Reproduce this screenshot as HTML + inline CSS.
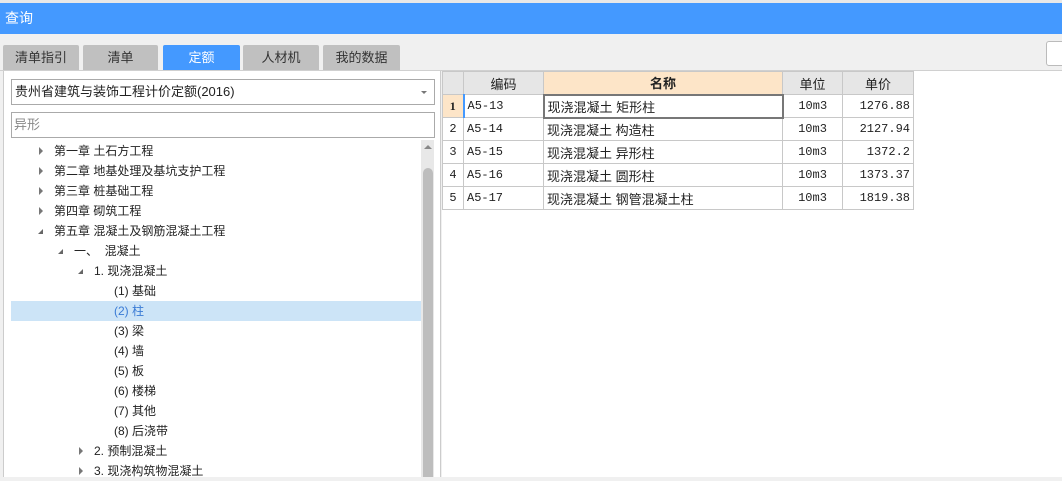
<!DOCTYPE html>
<html><head><meta charset="utf-8"><style>
*{margin:0;padding:0;box-sizing:border-box}
body{width:1062px;height:477px;overflow:hidden;background:#f0f0f0;font-family:"Liberation Sans","Noto Sans CJK SC",sans-serif;font-size:12px;color:#222;position:relative}
.a{position:absolute}
.tab{position:absolute;top:45px;height:25px;background:#c0c0c0;border-radius:2px 2px 0 0;text-align:center;line-height:26px;font-size:13px;color:#333}
.tr{position:absolute;height:20px;line-height:20px;font-size:12px;white-space:nowrap}
.arr{position:absolute;width:0;height:0}
td{border:1px solid #c8c8c8;height:23px;padding:0 3px;font-size:12px;white-space:nowrap}
.m{font-family:"Liberation Mono","Noto Sans CJK SC",monospace;font-size:12px}
.n{font-size:13px}
</style></head><body>
<div class="a" style="left:0;top:0;width:1062px;height:3px;background:#e8e8e8"></div>
<div class="a" style="left:0;top:3px;width:1062px;height:31px;background:#4499ff;color:#fff;font-size:14px;line-height:31px;padding-left:5px">查询</div>
<div class="tab" style="left:3px;width:76px">清单指引</div>
<div class="tab" style="left:83px;width:75px">清单</div>
<div class="tab" style="left:163px;width:77px;background:#4499ff;color:#fff">定额</div>
<div class="tab" style="left:243px;width:76px">人材机</div>
<div class="tab" style="left:323px;width:77px">我的数据</div>
<div class="a" style="left:1046px;top:41px;width:20px;height:25px;background:#fff;border:1px solid #bbb;border-radius:3px"></div>
<div class="a" style="left:0;top:70px;width:1062px;height:1px;background:#d0d0d0"></div>
<div class="a" style="left:3px;top:71px;width:438px;height:406px;background:#fff;border-left:1px solid #ccc;border-right:1px solid #ccc"></div>
<div class="a" style="left:11px;top:79px;width:424px;height:26px;border:1px solid #aaa;background:#fff;font-size:13px;line-height:24px;padding-left:3px">贵州省建筑与装饰工程计价定额(2016)<span style="position:absolute;right:7px;top:11px;border-left:3px solid transparent;border-right:3px solid transparent;border-top:3px solid #777"></span></div>
<div class="a" style="left:11px;top:112px;width:424px;height:26px;border:1px solid #aaa;background:#fff;font-size:13px;line-height:24px;padding-left:2px;color:#888">异形</div>
<div class="a" style="left:421px;top:140px;width:13px;height:337px;background:#e8e8e8"></div>
<div class="a" style="left:423px;top:168px;width:10px;height:309px;background:#bdbdbd;border-radius:5px 5px 0 0"></div>
<div class="a" style="left:424px;top:145px;border-left:4px solid transparent;border-right:4px solid transparent;border-bottom:4px solid #888"></div>
<div class="a" style="left:11px;top:301px;width:410px;height:20px;background:#cce4f7"></div>
<div class="tr" style="left:54px;top:141px">第一章 土石方工程</div>
<div class="tr" style="left:54px;top:161px">第二章 地基处理及基坑支护工程</div>
<div class="tr" style="left:54px;top:181px">第三章 桩基础工程</div>
<div class="tr" style="left:54px;top:201px">第四章 砌筑工程</div>
<div class="tr" style="left:54px;top:221px">第五章 混凝土及钢筋混凝土工程</div>
<div class="tr" style="left:74px;top:241px">一、&nbsp; 混凝土</div>
<div class="tr" style="left:94px;top:261px">1. 现浇混凝土</div>
<div class="tr" style="left:114px;top:281px">(1) 基础</div>
<div class="tr" style="left:114px;top:301px;color:#3a7bd5">(2) 柱</div>
<div class="tr" style="left:114px;top:321px">(3) 梁</div>
<div class="tr" style="left:114px;top:341px">(4) 墙</div>
<div class="tr" style="left:114px;top:361px">(5) 板</div>
<div class="tr" style="left:114px;top:381px">(6) 楼梯</div>
<div class="tr" style="left:114px;top:401px">(7) 其他</div>
<div class="tr" style="left:114px;top:421px">(8) 后浇带</div>
<div class="tr" style="left:94px;top:441px">2. 预制混凝土</div>
<div class="tr" style="left:94px;top:461px">3. 现浇构筑物混凝土</div>
<div class="arr" style="left:39px;top:147px;border-top:4px solid transparent;border-bottom:4px solid transparent;border-left:4px solid #777"></div>
<div class="arr" style="left:39px;top:167px;border-top:4px solid transparent;border-bottom:4px solid transparent;border-left:4px solid #777"></div>
<div class="arr" style="left:39px;top:187px;border-top:4px solid transparent;border-bottom:4px solid transparent;border-left:4px solid #777"></div>
<div class="arr" style="left:39px;top:207px;border-top:4px solid transparent;border-bottom:4px solid transparent;border-left:4px solid #777"></div>
<div class="arr" style="left:79px;top:447px;border-top:4px solid transparent;border-bottom:4px solid transparent;border-left:4px solid #777"></div>
<div class="arr" style="left:79px;top:467px;border-top:4px solid transparent;border-bottom:4px solid transparent;border-left:4px solid #777"></div>
<div class="arr" style="left:38px;top:229px;border-left:5px solid transparent;border-bottom:5px solid #666"></div>
<div class="arr" style="left:58px;top:249px;border-left:5px solid transparent;border-bottom:5px solid #666"></div>
<div class="arr" style="left:78px;top:269px;border-left:5px solid transparent;border-bottom:5px solid #666"></div>
<div class="a" style="left:442px;top:71px;width:620px;height:406px;background:#fff"></div>
<table class="a" style="left:442px;top:71px;border-collapse:collapse;background:#fff">
<tr style="background:#e6e6e6;text-align:center;font-size:13px"><td style="width:21px"></td><td class="n" style="width:80px">编码</td><td class="n" style="width:239px;background:#fde5c8;font-weight:bold">名称</td><td class="n" style="width:60px">单位</td><td class="n" style="width:71px">单价</td></tr>
<tr><td style="background:#fde5c8;text-align:center;font-weight:bold;font-family:'Liberation Serif',serif">1</td><td class="m" style="border-left:2px solid #4499ff">A5-13</td><td class="n" style="border:2px solid #777">现浇混凝土 矩形柱</td><td class="m" style="text-align:center">10m3</td><td class="m" style="text-align:right">1276.88</td></tr>
<tr><td class="m" style="text-align:center">2</td><td class="m">A5-14</td><td class="n">现浇混凝土 构造柱</td><td class="m" style="text-align:center">10m3</td><td class="m" style="text-align:right">2127.94</td></tr>
<tr><td class="m" style="text-align:center">3</td><td class="m">A5-15</td><td class="n">现浇混凝土 异形柱</td><td class="m" style="text-align:center">10m3</td><td class="m" style="text-align:right">1372.2</td></tr>
<tr><td class="m" style="text-align:center">4</td><td class="m">A5-16</td><td class="n">现浇混凝土 圆形柱</td><td class="m" style="text-align:center">10m3</td><td class="m" style="text-align:right">1373.37</td></tr>
<tr><td class="m" style="text-align:center">5</td><td class="m">A5-17</td><td class="n">现浇混凝土 钢管混凝土柱</td><td class="m" style="text-align:center">10m3</td><td class="m" style="text-align:right">1819.38</td></tr>
</table>
</body></html>
